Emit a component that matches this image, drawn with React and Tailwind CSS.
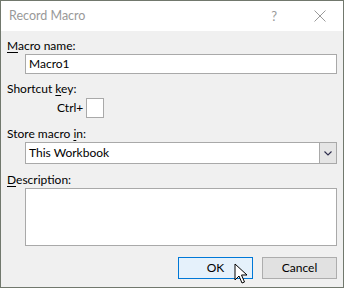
import React from "react";

function U({ children }) {
  return <span className="underline decoration-1 underline-offset-[2px]">{children}</span>;
}

export default function App() {
  return (
    <div className="relative w-[344px] h-[288px] overflow-hidden border border-[#71786d] bg-[#f0f0f0] flex flex-col font-['Lato',sans-serif] text-[12px] leading-[16px] text-black">
      {/* title bar */}
      <div className="h-[30px] bg-white flex items-center shrink-0">
        <span className="ml-[8px] text-[12.5px] text-[#999999]">Record Macro</span>
        <div className="ml-auto flex items-center">
          <span className="text-[13px] text-[#9a9a9a] mr-[37px]">?</span>
          <svg width="12" height="12" viewBox="0 0 12 12" className="mr-[17px]">
            <path d="M0.5 0.5 L11.5 11.5 M11.5 0.5 L0.5 11.5" stroke="#9a9a9a" strokeWidth="1" fill="none" />
          </svg>
        </div>
      </div>

      {/* body */}
      <div className="flex flex-col pl-[6px] pr-[6px] pt-[7px]">
        <div className="h-[16px]"><U>M</U>acro name:</div>
        <div className="ml-[18px] h-[20px] border border-[#a9a9a9] bg-white flex items-center pl-[3px]">Macro1</div>

        <div className="h-[16px] mt-[7px]">Shortcut <U>k</U>ey:</div>
        <div className="mt-[1px] flex items-center ml-[50px]">
          <span>Ctrl+</span>
          <div className="ml-[3px] w-[18px] h-[20px] border border-[#a9a9a9] bg-white"></div>
        </div>

        <div className="h-[16px] mt-[8px]">Store macro <U>i</U>n:</div>
        <div className="ml-[18px] h-[22px] border border-[#a9a9a9] bg-white flex items-stretch">
          <div className="flex-1 flex items-center pl-[3px]">This Workbook</div>
          <div className="w-[17px] bg-[#e5e5e5] border-l border-[#a9a9a9] flex items-center justify-center">
            <svg width="8" height="5" viewBox="0 0 8 5">
              <path d="M0.5 0.5 L4 4 L7.5 0.5" stroke="#2c2c4c" strokeWidth="1.1" fill="none" />
            </svg>
          </div>
        </div>

        <div className="h-[16px] mt-[8px]"><U>D</U>escription:</div>
        <div className="ml-[18px] h-[58px] border border-[#a9a9a9] bg-white"></div>

        <div className="mt-[11px] flex justify-end gap-[9px]">
          <div className="w-[75px] h-[22px] border border-[#0078d7] bg-[#e5f1fb] flex items-center justify-center">OK</div>
          <div className="w-[75px] h-[22px] border border-[#adadad] bg-[#e1e1e1] flex items-center justify-center">Cancel</div>
        </div>
      </div>

      {/* mouse cursor */}
      <svg width="14" height="22" viewBox="0 0 14 22" className="absolute left-[233px] top-[262px]">
        <path d="M1 1 L1 17 L5 13 L8 20 L10.5 19 L7.5 12 L13 12 Z" fill="white" stroke="black" strokeWidth="1" strokeLinejoin="miter" />
      </svg>
    </div>
  );
}
